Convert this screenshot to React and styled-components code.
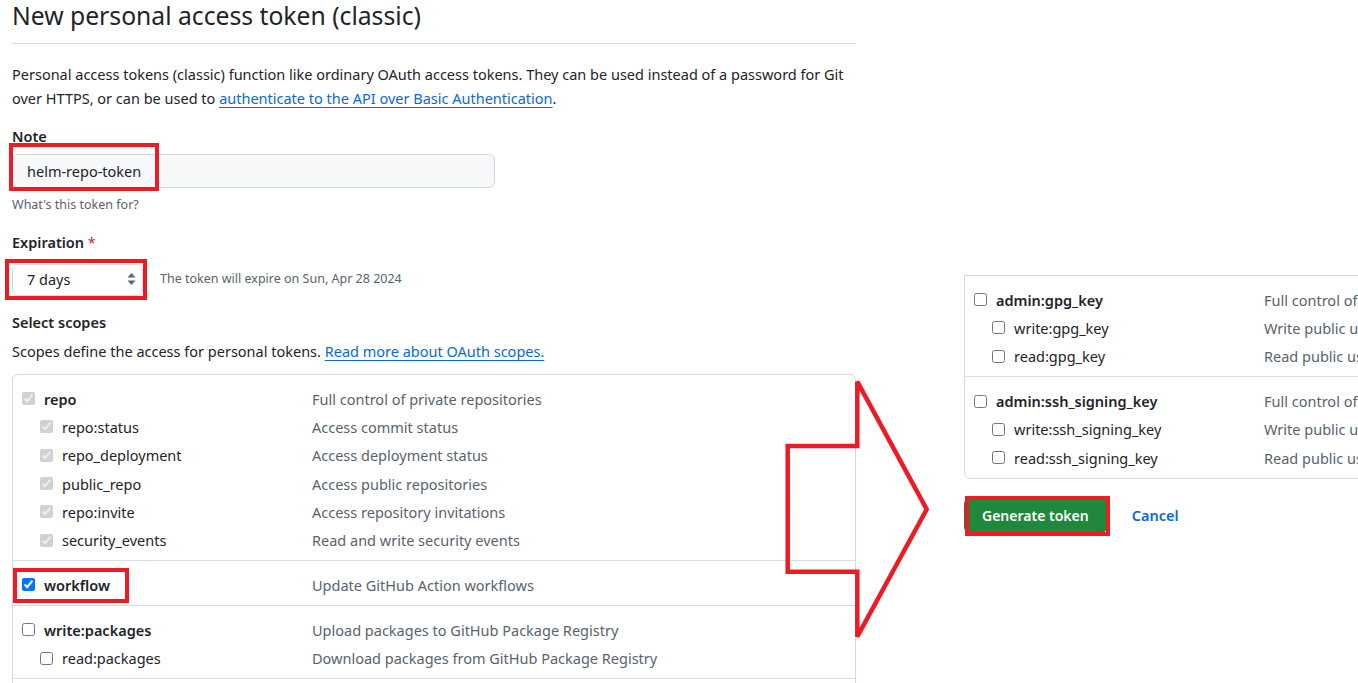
import styled, { createGlobalStyle } from "styled-components";

const GlobalStyle = createGlobalStyle`
  html, body {
    margin: 0;
    padding: 0;
    background: #ffffff;
    overflow: hidden;
  }
  body {
    font-family: "Noto Sans", "Open Sans", "Liberation Sans", sans-serif;
    color: #1f2328;
  }
  * {
    box-sizing: border-box;
  }
`;

const mainScopes = [
  {
    name: "repo",
    desc: "Full control of private repositories",
    disabled: true,
    checked: true,
    children: [
      ["repo:status", "Access commit status"],
      ["repo_deployment", "Access deployment status"],
      ["public_repo", "Access public repositories"],
      ["repo:invite", "Access repository invitations"],
      ["security_events", "Read and write security events"],
    ],
  },
  {
    name: "workflow",
    desc: "Update GitHub Action workflows",
    checked: true,
    highlight: true,
    children: [],
  },
  {
    name: "write:packages",
    desc: "Upload packages to GitHub Package Registry",
    children: [["read:packages", "Download packages from GitHub Package Registry"]],
  },
  {
    name: "delete:packages",
    desc: "Delete packages from GitHub Package Registry",
    children: [],
  },
];

const keyScopes = [
  {
    name: "admin:gpg_key",
    desc: "Full control of public user GPG keys",
    children: [
      ["write:gpg_key", "Write public user GPG keys"],
      ["read:gpg_key", "Read public user GPG keys"],
    ],
  },
  {
    name: "admin:ssh_signing_key",
    desc: "Full control of public user SSH signing keys",
    children: [
      ["write:ssh_signing_key", "Write public user SSH signing keys"],
      ["read:ssh_signing_key", "Read public user SSH signing keys"],
    ],
  },
];

const ScopeGroupView = ({ group }) => (
  <ScopeGroup>
    <ScopeRow>
      <ScopeName $parent>
        <Checkbox
          type="checkbox"
          checked={!!group.checked}
          disabled={!!group.disabled}
          readOnly
        />
        {group.name}
        {group.highlight && <Highlight $top={-7} $left={-9} $width={116} $bottom={-8} />}
      </ScopeName>
      <ScopeDesc>{group.desc}</ScopeDesc>
    </ScopeRow>
    {group.children.map(([name, desc]) => (
      <ScopeRow key={name}>
        <ScopeName $child>
          <Checkbox
            type="checkbox"
            checked={!!group.checked}
            disabled={!!group.disabled}
            readOnly
          />
          {name}
        </ScopeName>
        <ScopeDesc>{desc}</ScopeDesc>
      </ScopeRow>
    ))}
  </ScopeGroup>
);

const SelectArrows = () => (
  <svg width="9" height="14" viewBox="0 0 9 14">
    <path d="M4.5 1 L8.5 5.5 L0.5 5.5 Z" fill="#59636e" />
    <path d="M4.5 13 L8.5 8.5 L0.5 8.5 Z" fill="#59636e" />
  </svg>
);

const Arrow = () => (
  <ArrowSvg width="160" height="280" viewBox="0 0 160 280">
    <polygon
      points="77.3,11.7 146.7,139.3 77.3,266.7 77.3,201.7 7.7,201.7 7.7,76 77.3,76"
      fill="none"
      stroke="#ed1c24"
      strokeWidth="4.5"
      strokeLinejoin="miter"
    />
  </ArrowSvg>
);

const App = () => {
  return (
    <>
      <GlobalStyle />
      <Page>
        <LeftColumn>
          <Title>New personal access token (classic)</Title>
          <Intro>
            Personal access tokens (classic) function like ordinary OAuth access tokens. They can be
            used instead of a password for Git over HTTPS, or can be used to{" "}
            <TextLink>authenticate to the API over Basic Authentication</TextLink>.
          </Intro>

          <Label $mt={16}>Note</Label>
          <Field>
            <TextInput readOnly defaultValue="helm-repo-token" />
            <Highlight $top={-3} $left={-3} $width={150} $bottom={-3} />
          </Field>
          <Hint>What's this token for?</Hint>

          <Label $mt={18}>
            Expiration <Required>*</Required>
          </Label>
          <ExpirationRow>
            <Field>
              <SelectBox>
                <span>7 days</span>
                <SelectArrows />
              </SelectBox>
              <Highlight $top={-5} $left={-7} $width={142} $bottom={-4} />
            </Field>
            <Hint $inline>The token will expire on Sun, Apr 28 2024</Hint>
          </ExpirationRow>

          <Label $mt={16}>Select scopes</Label>
          <Lead>
            Scopes define the access for personal tokens.{" "}
            <TextLink>Read more about OAuth scopes.</TextLink>
          </Lead>

          <ScopeBox>
            {mainScopes.map((g) => (
              <ScopeGroupView key={g.name} group={g} />
            ))}
          </ScopeBox>
        </LeftColumn>

        <RightColumn>
          <ScopeBox $cropped>
            {keyScopes.map((g) => (
              <ScopeGroupView key={g.name} group={g} />
            ))}
          </ScopeBox>
          <Actions>
            <Field>
              <PrimaryButton>Generate token</PrimaryButton>
              <Highlight $top={-2} $left={1} $width={145} $bottom={-3} />
            </Field>
            <CancelLink>Cancel</CancelLink>
          </Actions>
        </RightColumn>

        <Arrow />
      </Page>
    </>
  );
};

export default App;

const Page = styled.div`
  position: relative;
  display: flex;
  align-items: flex-start;
  width: 1358px;
  height: 683px;
  overflow: hidden;
`;

const LeftColumn = styled.div`
  flex-shrink: 0;
  width: 844px;
  margin-left: 12px;
`;

const RightColumn = styled.div`
  flex-shrink: 0;
  width: 844px;
  margin-left: 108px;
  padding-top: 275px;
`;

const Title = styled.h2`
  margin: 0;
  font-size: 24.7px;
  font-weight: 400;
  line-height: 32px;
  padding-bottom: 11px;
  border-bottom: 1px solid #d8dee4;
  color: #1f2328;
`;

const Intro = styled.p`
  margin: 18px 0 0;
  font-size: 14.5px;
  line-height: 24px;
`;

const TextLink = styled.a`
  color: #0969da;
  text-decoration: underline;
  text-underline-offset: 3px;
  cursor: pointer;
`;

const Label = styled.div`
  margin-top: ${(p) => p.$mt}px;
  font-size: 14.5px;
  font-weight: 600;
  line-height: 20px;
`;

const Required = styled.span`
  color: #d1242f;
  font-weight: 400;
`;

const Field = styled.div`
  position: relative;
  display: inline-flex;
`;

const TextInput = styled.input`
  width: 483px;
  height: 34px;
  margin-top: 8px;
  padding: 0 14px 1px;
  font-family: inherit;
  font-size: 14.5px;
  color: #1f2328;
  background: #f6f8fa;
  border: 1px solid #d1d9e0;
  border-radius: 6px;
  outline: none;
`;

const Hint = styled.div`
  margin-top: ${(p) => (p.$inline ? 0 : 8)}px;
  margin-left: ${(p) => (p.$inline ? 17 : 0)}px;
  padding-bottom: ${(p) => (p.$inline ? 3 : 0)}px;
  font-size: 12.5px;
  line-height: 18px;
  color: #59636e;
`;

const ExpirationRow = styled.div`
  display: flex;
  align-items: center;
  margin-top: 12px;
`;

const SelectBox = styled.div`
  display: flex;
  align-items: center;
  justify-content: space-between;
  width: 131px;
  height: 32px;
  padding: 0 6px 2px 14px;
  font-size: 14.5px;
  background: #ffffff;
  border: 1px solid #d1d9e0;
  border-radius: 6px;
  box-shadow: 0 1px 0 rgba(31, 35, 40, 0.04);
`;

const Lead = styled.div`
  margin-top: 9px;
  font-size: 14.5px;
  line-height: 20px;
`;

const ScopeBox = styled.div`
  margin-top: ${(p) => (p.$cropped ? 0 : 13)}px;
  width: 844px;
  border: 1px solid #d1d9e0;
  border-radius: ${(p) => (p.$cropped ? "0 0 6px 6px" : "6px")};
`;

const ScopeGroup = styled.div`
  padding: 9.5px 0 6px;
  & + & {
    border-top: 1px solid #d8dee4;
  }
`;

const ScopeRow = styled.div`
  display: grid;
  grid-template-columns: 290px 1fr;
  align-items: center;
  height: 28.3px;
  padding-left: 9px;
`;

const ScopeName = styled.label`
  position: relative;
  display: flex;
  align-items: center;
  gap: 9px;
  padding-left: ${(p) => (p.$child ? 18 : 0)}px;
  font-size: 14.5px;
  font-weight: ${(p) => (p.$parent ? 600 : 400)};
  color: #1f2328;
  white-space: nowrap;
`;

const Checkbox = styled.input`
  width: 13px;
  height: 13px;
  margin: 0;
  flex-shrink: 0;
`;

const ScopeDesc = styled.div`
  font-size: 14.5px;
  color: #59636e;
  white-space: nowrap;
`;

const Actions = styled.div`
  display: flex;
  align-items: center;
  margin-top: 19px;
`;

const PrimaryButton = styled.button`
  height: 35px;
  padding: 0 17px;
  font-family: inherit;
  font-size: 14px;
  font-weight: 600;
  color: #ffffff;
  background: #1f883d;
  border: 1px solid rgba(31, 35, 40, 0.15);
  border-radius: 6px;
`;

const CancelLink = styled.a`
  margin-left: 25px;
  font-size: 14.5px;
  font-weight: 600;
  color: #0969da;
  cursor: pointer;
`;

const Highlight = styled.span`
  position: absolute;
  top: ${(p) => p.$top}px;
  left: ${(p) => p.$left}px;
  bottom: ${(p) => p.$bottom}px;
  width: ${(p) => p.$width}px;
  border: 4px solid #ed1c24;
  pointer-events: none;
`;

const ArrowSvg = styled.svg`
  position: absolute;
  left: 780px;
  top: 370px;
`;
